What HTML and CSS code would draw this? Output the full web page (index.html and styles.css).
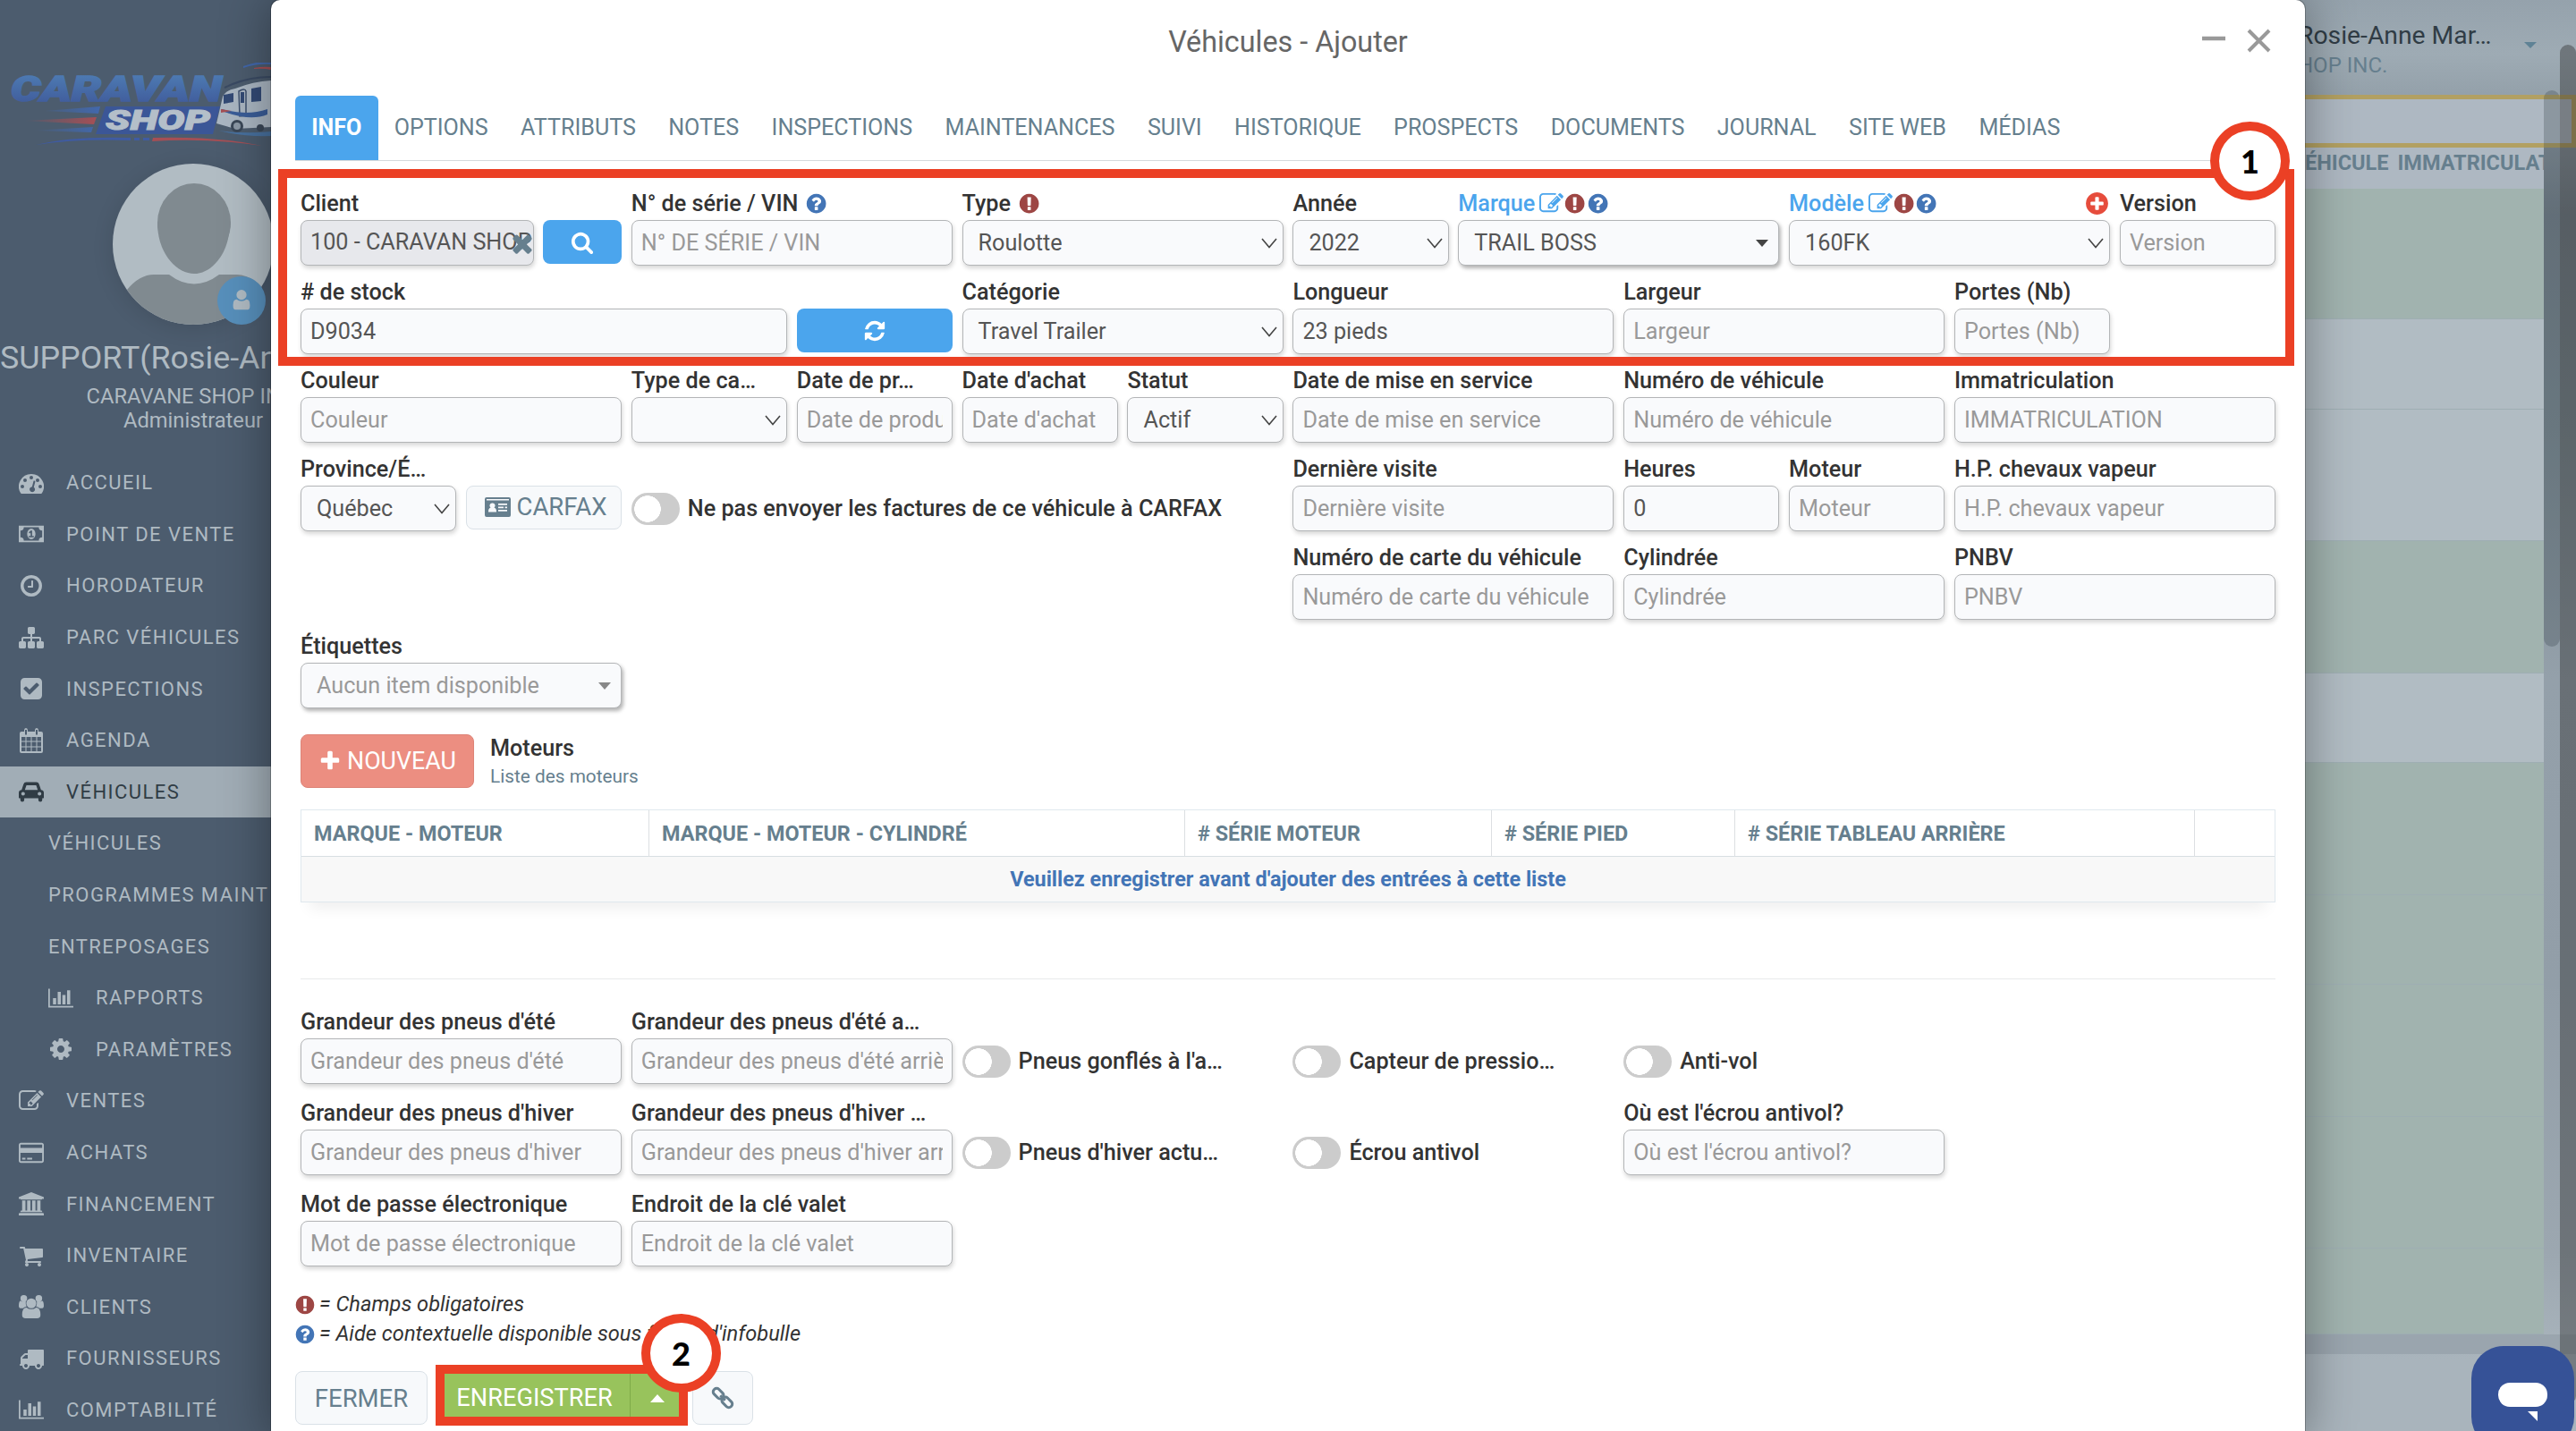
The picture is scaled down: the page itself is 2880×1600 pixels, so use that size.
FILE: index.html
```html
<!DOCTYPE html>
<html lang="fr">
<head>
  <meta charset="UTF-8">
  <meta name="viewport" content="width=device-width, initial-scale=1.0">
  <title>Véhicules - Ajouter</title>
  <link rel="stylesheet" href="styles.css">
</head>
<body>
  <svg class="sprite">
    <symbol id="i-dash" viewBox="0 0 1792 1792"><path fill-rule="evenodd" d="M896 256a896 896 0 0 0-755 1379q19 29 54 29h1402q35 0 54-29a896 896 0 0 0-755-1379zM256 1024a128 128 0 1 1 0 256 128 128 0 1 1 0-256zM448 576a128 128 0 1 1 0 256 128 128 0 1 1 0-256zM896 384a128 128 0 1 1 0 256 128 128 0 1 1 0-256zM1344 576a128 128 0 1 1 0 256 128 128 0 1 1 0-256zM1536 1024a128 128 0 1 1 0 256 128 128 0 1 1 0-256zM950 1160l101-382q6-26 29-39t49-7 39 30 7 48l-101 382a192 192 0 1 1-124-32z"/></symbol>
    <symbol id="i-money" viewBox="0 0 1920 1792"><path fill-rule="evenodd" d="M0 256h1920v1280H0zM384 384a256 256 0 0 1-256 256v512a256 256 0 0 1 256 256h1152a256 256 0 0 1 256-256V640a256 256 0 0 1-256-256zM960 480a320 416 0 1 1 0 832 320 416 0 1 1 0-832zM768 1152h384v-96h-128V640H910L762 777l77 80 72-64v263H768z"/></symbol>
    <symbol id="i-clock" viewBox="0 0 1792 1792"><path d="M1024 544v448q0 14-9 23t-23 9h-320q-14 0-23-9t-9-23v-64q0-14 9-23t23-9h224v-352q0-14 9-23t23-9h64q14 0 23 9t9 23zm416 352q0-148-73-273t-198-198-273-73-273 73-198 198-73 273 73 273 198 198 273 73 273-73 198-198 73-273zm224 0q0 209-103 385.5t-279.5 279.5-385.5 103-385.5-103-279.5-279.5-103-385.5 103-385.5 279.5-279.5 385.5-103 385.5 103 279.5 279.5 103 385.5z"/></symbol>
    <symbol id="i-sitemap" viewBox="0 0 1792 1792"><path d="M1792 1248v320q0 40-28 68t-68 28h-320q-40 0-68-28t-28-68v-320q0-40 28-68t68-28h96v-192h-512v192h96q40 0 68 28t28 68v320q0 40-28 68t-68 28h-320q-40 0-68-28t-28-68v-320q0-40 28-68t68-28h96v-192h-512v192h96q40 0 68 28t28 68v320q0 40-28 68t-68 28h-320q-40 0-68-28t-28-68v-320q0-40 28-68t68-28h96v-192q0-52 38-90t90-38h512v-192h-96q-40 0-68-28t-28-68v-320q0-40 28-68t68-28h320q40 0 68 28t28 68v320q0 40-28 68t-68 28h-96v192h512q52 0 90 38t38 90v192h96q40 0 68 28t28 68z"/></symbol>
    <symbol id="i-check" viewBox="0 0 1792 1792"><path d="M813 1299l614-614q19-19 19-45t-19-45l-102-102q-19-19-45-19t-45 19l-467 467-211-211q-19-19-45-19t-45 19l-102 102q-19 19-19 45t19 45l358 358q19 19 45 19t45-19zm851-883v960q0 119-84.500 203.500t-203.500 84.500h-960q-119 0-203.500-84.500t-84.500-203.500v-960q0-119 84.500-203.500t203.500-84.500h960q119 0 203.500 84.500t84.500 203.500z"/></symbol>
    <symbol id="i-calendar" viewBox="0 0 1792 1792"><path fill-rule="evenodd" d="M192 256h192V160q0-160 128-160t128 160v96h512V160q0-160 128-160t128 160v96h192q128 0 128 128v1280q0 128-128 128H192q-128 0-128-128V384q0-128 128-128zM448 128v352h128V128zM1216 128v352h128V128zM192 640v288h288V640zM544 640v288h320V640zM928 640v288h320V640zM1312 640v288h288V640zM192 992v320h288V992zM544 992v320h320V992zM928 992v320h320V992zM1312 992v320h288V992zM192 1376v288h288v-288zM544 1376v288h320v-288zM928 1376v288h320v-288zM1312 1376v288h288v-288z"/></symbol>
    <symbol id="i-car" viewBox="0 0 2048 1792"><path fill-rule="evenodd" d="M230 768L390 290q46-162 220-162h828q174 0 220 162l160 478q230 20 230 230v410q0 32-32 32h-96v128q0 160-160 160t-160-160v-128H448v128q0 160-160 160t-160-160v-128H32q-32 0-32-32V998q0-210 230-230zM496 768h1056L1430 400q-8-16-24-16H642q-16 0-24 16zM352 928a150 150 0 1 0 0 300 150 150 0 1 0 0-300zM1696 928a150 150 0 1 0 0 300 150 150 0 1 0 0-300z"/></symbol>
    <symbol id="i-chart" viewBox="0 0 2048 1792"><path d="M640 896v512h-256v-512h256zm384-512v1024h-256v-1024h256zm1024 1152v128h-2048v-1536h128v1408h1920zm-640-896v768h-256v-768h256zm384-384v1152h-256v-1152h256z"/></symbol>
    <symbol id="i-cog" viewBox="0 0 1792 1792"><path d="M1152 896q0-106-75-181t-181-75-181 75-75 181 75 181 181 75 181-75 75-181zm512-109v222q0 12-8 23t-20 13l-185 28q-19 54-39 91 35 50 107 138 10 12 10 25t-9 23q-27 37-99 108t-94 71q-12 0-26-9l-138-108q-44 23-91 38-16 136-29 186-7 28-36 28h-222q-14 0-24.500-8.500t-11.500-21.500l-28-184q-49-16-90-37l-141 107q-10 9-25 9-14 0-25-11-126-114-165-168-7-10-7-23 0-12 8-23 15-21 51-66.500t54-70.500q-27-50-41-99l-183-27q-13-2-21-12.500t-8-23.500v-222q0-12 8-23t19-13l186-28q14-46 39-92-40-57-107-138-10-12-10-24 0-10 9-23 26-36 98.500-107.500t94.500-71.500q13 0 26 10l138 107q44-23 91-38 16-136 29-186 7-28 36-28h222q14 0 24.500 8.500t11.500 21.500l28 184q49 16 90 37l142-107q9-9 24-9 13 0 25 10 129 119 165 170 7 8 7 22 0 12-8 23-15 21-51 66.500t-54 70.500q26 50 41 98l183 28q13 2 21 12.500t8 23.500z"/></symbol>
    <symbol id="i-edit" viewBox="0 0 1792 1792"><path d="M888 1184l116-116-152-152-116 116v56h96v96h56zm440-720q-16-16-33 1l-350 350q-17 17-1 33t33-1l350-350q17-17 1-33zm80 594v190q0 119-84.500 203.500t-203.500 84.500h-832q-119 0-203.500-84.500t-84.500-203.500v-832q0-119 84.500-203.500t203.500-84.500h832q63 0 117 25 15 7 18 23 3 17-9 29l-49 49q-14 14-32 8-23-6-45-6h-832q-66 0-113 47t-47 113v832q0 66 47 113t113 47h832q66 0 113-47t47-113v-126q0-13 9-22l64-64q15-15 35-7t20 29zm-96-738l288 288-672 672h-288v-288zm444 132l-92 92-288-288 92-92q28-28 68-28t68 28l152 152q28 28 28 68t-28 68z"/></symbol>
    <symbol id="i-card" viewBox="0 0 1920 1792"><path d="M1760 128q66 0 113 47t47 113v1216q0 66-47 113t-113 47h-1600q-66 0-113-47t-47-113v-1216q0-66 47-113t113-47h1600zm-1600 128q-13 0-22.500 9.500t-9.500 22.500v224h1664v-224q0-13-9.500-22.500t-22.500-9.500h-1600zm1600 1280q13 0 22.500-9.500t9.500-22.500v-608h-1664v608q0 13 9.500 22.500t22.500 9.500h1600zm-1504-128v-128h256v128h-256zm384 0v-128h384v128h-384z"/></symbol>
    <symbol id="i-bank" viewBox="0 0 1920 1792"><path d="M960 0l960 384v128h-128q0 26-20.500 45t-48.500 19h-1526q-28 0-48.500-19t-20.500-45h-128v-128zm-704 640h256v768h128v-768h256v768h128v-768h256v768h128v-768h256v768h59q28 0 48.500 19t20.500 45v64h-1664v-64q0-26 20.500-45t48.500-19h59v-768zm1595 960q28 0 48.500 19t20.500 45v128h-1920v-128q0-26 20.500-45t48.500-19h1782z"/></symbol>
    <symbol id="i-cart" viewBox="0 0 1792 1792"><path d="M704 1536q0 52-38 90t-90 38-90-38-38-90 38-90 90-38 90 38 38 90zm896 0q0 52-38 90t-90 38-90-38-38-90 38-90 90-38 90 38 38 90zm128-1088v512q0 24-16.500 42.500t-40.500 21.500l-1044 122q13 60 13 70 0 16-24 64h920q26 0 45 19t19 45-19 45-45 19h-1024q-26 0-45-19t-19-45q0-11 8-31.500t16-36 21.500-40 15.500-29.500l-177-823h-204q-26 0-45-19t-19-45 19-45 45-19h256q16 0 28.500 6.500t19.500 15.500 13 24.500 8 26 5.500 29.500 4.500 26h1201q26 0 45 19t19 45z"/></symbol>
    <symbol id="i-users" viewBox="0 0 1920 1792"><path d="M384 0a256 256 0 1 1 0 512 256 256 0 1 1 0-512zM1536 0a256 256 0 1 1 0 512 256 256 0 1 1 0-512zM960 256a384 384 0 1 1 0 768 384 384 0 1 1 0-768zM593 896q-162 5-265 128H194Q0 1024 0 850q0-402 140-402 80 60 244 64 80 0 150-26-22 240 59 410zM1327 896q162 5 265 128h134q194 0 194-174 0-402-140-402-80 60-244 64-80 0-150-26 22 240-59 410zM1664 1533q0 259-267 259H523q-267 0-267-259 0-573 340-573 150 128 364 128t364-128q340 0 340 573z"/></symbol>
    <symbol id="i-truck" viewBox="0 0 1792 1792"><path d="M640 1408q0-52-38-90t-90-38-90 38-38 90 38 90 90 38 90-38 38-90zm-384-512h384v-256h-158q-13 0-22 9l-195 195q-9 9-9 22v30zm1280 512q0-52-38-90t-90-38-90 38-38 90 38 90 90 38 90-38 38-90zm256-1088v1024q0 15-4 26.500t-13.500 18.500-16.500 11.500-23.500 6-22.500 2-25.500 0-22.500-.5q0 106-75 181t-181 75-181-75-75-181h-384q0 106-75 181t-181 75-181-75-75-181h-64q-3 0-22.500.5t-25.500 0-22.500-2-23.500-6-16.500-11.500-13.500-18.500-4-26.500q0-26 19-45t45-19v-320q0-8-.5-35t0-38 2.500-34.500 6.500-37 14-30.500 22.500-30l198-198q19-19 50.500-32t58.500-13h160v-192q0-26 19-45t45-19h1024q26 0 45 19t19 45z"/></symbol>
    <symbol id="i-user" viewBox="0 0 1792 1792"><path d="M1600 1280q0 384-190 384H382q-190 0-190-384 0-480 300-480 180 150 404 150t404-150q300 0 300 480zM896 0a420 420 0 1 1 0 840 420 420 0 1 1 0-840z"/></symbol>
    <symbol id="i-plus" viewBox="0 0 1792 1792"><path d="M1600 736v192q0 40-28 68t-68 28h-416v416q0 40-28 68t-68 28h-192q-40 0-68-28t-28-68v-416h-416q-40 0-68-28t-28-68v-192q0-40 28-68t68-28h416v-416q0-40 28-68t68-28h192q40 0 68 28t28 68v416h416q40 0 68 28t28 68z"/></symbol>
    <symbol id="i-search" viewBox="0 0 1792 1792"><path d="M1216 832q0-185-131.500-316.500t-316.500-131.500-316.500 131.500-131.500 316.500 131.500 316.500 316.500 131.500 316.500-131.500 131.500-316.500zm512 832q0 52-38 90t-90 38q-54 0-90-38l-343-342q-179 124-399 124-143 0-273.500-55.500t-225-150-150-225-55.500-273.500 55.500-273.500 150-225 225-150 273.500-55.500 273.500 55.500 225 150 150 225 55.500 273.500q0 220-124 399l343 343q37 37 37 90z"/></symbol>
    <symbol id="i-refresh" viewBox="0 0 1792 1792"><path d="M1639 1056q0 5-1 7-64 268-268 434.500t-478 166.500q-146 0-282.500-55t-243.500-157l-129 129q-19 19-45 19t-45-19-19-45v-448q0-26 19-45t45-19h448q26 0 45 19t19 45-19 45l-137 137q71 66 161 102t187 36q134 0 250-65t186-179q11-17 53-117 8-23 30-23h192q13 0 22.500 9.500t9.500 22.500zm25-800v448q0 26-19 45t-45 19h-448q-26 0-45-19t-19-45 19-45l138-138q-148-137-349-137-134 0-250 65t-186 179q-11 17-53 117-8 23-30 23h-199q-13 0-22.500-9.500t-9.500-22.500v-7q65-268 270-434.500t480-166.500q146 0 284 55.500t245 156.500l130-129q19-19 45-19t45 19 19 45z"/></symbol>
    <symbol id="i-times" viewBox="0 0 1792 1792"><path d="M1490 1322q0 40-28 68l-136 136q-28 28-68 28t-68-28l-294-294-294 294q-28 28-68 28t-68-28l-136-136q-28-28-28-68t28-68l294-294-294-294q-28-28-28-68t28-68l136-136q28-28 68-28t68 28l294 294 294-294q28-28 68-28t68 28l136 136q28 28 28 68t-28 68l-294 294 294 294q28 28 28 68z"/></symbol>
    <symbol id="i-req" viewBox="0 0 1792 1792"><path d="M896 128q209 0 385.500 103t279.500 279.500 103 385.500-103 385.500-279.500 279.500-385.500 103-385.500-103-279.500-279.500-103-385.500 103-385.500 279.500-279.500 385.500-103zm128 1247v-190q0-14-9-23.500t-22-9.500h-192q-13 0-23 10t-10 23v190q0 13 10 23t23 10h192q13 0 22-9.500t9-23.500zm-2-344l18-621q0-12-10-18-10-8-24-8h-220q-14 0-24 8-10 6-10 18l17 621q0 10 10 17.500t24 7.500h185q14 0 23.500-7.500t10.500-17.500z"/></symbol>
    <symbol id="i-help" viewBox="0 0 1792 1792"><path d="M1024 1376v-192q0-14-9-23t-23-9h-192q-14 0-23 9t-9 23v192q0 14 9 23t23 9h192q14 0 23-9t9-23zm256-672q0-88-55.500-163t-138.500-116-170-41q-243 0-371 213-15 24 8 42l132 100q7 6 19 6 16 0 25-12 53-68 86-92 34-24 86-24 48 0 85.500 26t37.500 59q0 38-20 61t-68 45q-63 28-115.500 86.500t-52.500 125.500v36q0 14 9 23t23 9h192q14 0 23-9t9-23q0-19 21.500-49.500t54.500-49.500q32-18 49-28.500t46-35 44.500-48 28-60.500 12.500-81zm384 192q0 209-103 385.500t-279.500 279.500-385.500 103-385.500-103-279.500-279.500-103-385.500 103-385.500 279.500-279.500 385.500-103 385.500 103 279.500 279.500 103 385.500z"/></symbol>
    <symbol id="i-addc" viewBox="0 0 1792 1792"><path d="M1344 960v-128q0-26-19-45t-45-19h-256v-256q0-26-19-45t-45-19h-128q-26 0-45 19t-19 45v256h-256q-26 0-45 19t-19 45v128q0 26 19 45t45 19h256v256q0 26 19 45t45 19h128q26 0 45-19t19-45v-256h256q26 0 45-19t19-45zm320-64q0 209-103 385.500t-279.500 279.500-385.500 103-385.500-103-279.500-279.500-103-385.500 103-385.500 279.500-279.500 385.500-103 385.500 103 279.500 279.500 103 385.500z"/></symbol>
    <symbol id="i-idcard" viewBox="0 0 29 22"><path fill-rule="evenodd" d="M2 0h25a2 2 0 0 1 2 2v18a2 2 0 0 1-2 2H2a2 2 0 0 1-2-2V2a2 2 0 0 1 2-2zM2 2v1.500h25V2zM8.500 6.500a2.800 2.800 0 0 0-2 5C4.500 12 4 14 4 16.500h9c0-2.500-.5-4.500-2.500-5a2.800 2.800 0 0 0-2-5zM15 7v1.800h10V7zM15 10.500v1.800h6v-1.800zM22.500 10.500v1.800H25v-1.800zM15 14v1.800h10V14z"/></symbol>
    <symbol id="i-link" viewBox="0 0 24 24"><g fill="none" stroke="currentColor" stroke-width="2.800"><rect x="1.500" y="4" width="12" height="7" rx="3.200" transform="rotate(45 7.500 7.500)"/><rect x="10.500" y="13" width="12" height="7" rx="3.200" transform="rotate(45 16.500 16.500)"/><path d="M9.500 9.500l5 5"/></g></symbol>
    <symbol id="i-chev" viewBox="0 0 18 12"><path d="M1 1l8 9.500L17 1" fill="none" stroke="#444" stroke-width="1.600"/></symbol>
  </svg>

  <aside class="sidebar">
    <svg class="logo" viewBox="0 0 303 100">
      <defs>
        <linearGradient id="blue" x1="0" y1="0" x2="0" y2="1"><stop offset="0" stop-color="#4f7fb6"/><stop offset="1" stop-color="#3e5798"/></linearGradient>
        <linearGradient id="fade"><stop offset="0" stop-color="#4268ad" stop-opacity="0"/><stop offset="1" stop-color="#4268ad"/></linearGradient>
        <linearGradient id="fadered"><stop offset="0" stop-color="#a54f55" stop-opacity="0"/><stop offset="1" stop-color="#a54f55"/></linearGradient>
      </defs>
      <text class="logo-top" x="12" y="43" textLength="236" lengthAdjust="spacingAndGlyphs" fill="url(#blue)" stroke="url(#blue)">CARAVAN</text>
      <path d="M50 54l62-5-2 8zM36 76l68-4-2 6z" fill="url(#fade)"/>
      <path d="M26 65l82-4-3 8z" fill="url(#fadered)"/>
      <path d="M118 49h128l-8 31H107z" fill="#3b5697"/>
      <text class="logo-bottom" x="118" y="75" textLength="117" lengthAdjust="spacingAndGlyphs">SHOP</text>
      <path d="M40 92q40-10 106-8v3q-60-2-106 5z" fill="#3f5ba3"/>
      <path d="M150 84h6v3h-6zM160 84h7v3h-7z" fill="#3f5ba3"/>
      <path d="M171 84q70-2 122 9-60-9-123-5z" fill="#a54f55"/>
      <path d="M272 4q16-6 31-5v3q-16-1-31 4z" fill="#4268ad"/>
      <path d="M284 6q10-2 19-1v3q-9-2-19-1z" fill="#a54f55"/>
      <path d="M242 68l7-30q3-7 14-9 20-8 40-9v52l-40 2z" fill="#aab6c2"/>
      <path d="M251 28l9-4q20-8 43-8" fill="none" stroke="#3a4a63" stroke-width="2"/>
      <path d="M250 36l11-2v10l-11 2zM281 29l11-2v16l-11 1z" fill="#334a75"/>
      <path d="M267 32q7-4 8 0v27l-7 1z" fill="none" stroke="#3d4f6d" stroke-width="1.500"/>
      <path d="M269 33h4v12h-4z" fill="#334a75"/>
      <path d="M248 52q28 8 51 0v6q-20 8-51-4z" fill="#3a5d98"/>
      <path d="M247 52l12 2-12 2z" fill="#a54f55"/>
      <path d="M244 76q30 4 59 1v5q-30 1-59-6z" fill="#48719f"/>
      <circle cx="265" cy="71" r="7" fill="#3a4757"/><circle cx="265" cy="71" r="4" fill="#8b98a5"/>
      <circle cx="291" cy="73" r="4" fill="#3a4757"/>
    </svg>
    <div class="avatar">
      <svg viewBox="0 0 180 180"><clipPath id="av"><circle cx="90" cy="90" r="90"/></clipPath>
        <g clip-path="url(#av)"><path fill="#b1bcc3" d="M0 0h180v180H0z"/><ellipse cx="91" cy="66" rx="41" ry="44" fill="#808a90"/><path d="M50 66c0 35 22 57 41 57s40-22 40-57z" fill="#808a90"/><path d="M0 180v-24l16-15q14-17 30-17h17q28 21 56 0h20q20 0 41 30v26z" fill="#808a90"/></g></svg>
      <span class="avatar-badge"><svg class="ic"><use href="#i-user"/></svg></span>
    </div>
    <div class="who">SUPPORT(Rosie-Anne M</div>
    <div class="who-sub">CARAVANE SHOP INC.<br>Administrateur</div>
    <nav class="menu">
      <a><svg class="ic"><use href="#i-dash"/></svg>ACCUEIL</a>
      <a><svg class="ic"><use href="#i-money"/></svg>POINT DE VENTE</a>
      <a><svg class="ic"><use href="#i-clock"/></svg>HORODATEUR</a>
      <a><svg class="ic"><use href="#i-sitemap"/></svg>PARC VÉHICULES</a>
      <a><svg class="ic"><use href="#i-check"/></svg>INSPECTIONS</a>
      <a><svg class="ic"><use href="#i-calendar"/></svg>AGENDA</a>
      <a class="active"><svg class="ic"><use href="#i-car"/></svg>VÉHICULES</a>
      <a class="sub">VÉHICULES</a>
      <a class="sub">PROGRAMMES MAINT</a>
      <a class="sub">ENTREPOSAGES</a>
      <a class="sub"><svg class="ic"><use href="#i-chart"/></svg>RAPPORTS</a>
      <a class="sub"><svg class="ic"><use href="#i-cog"/></svg>PARAMÈTRES</a>
      <a><svg class="ic"><use href="#i-edit"/></svg>VENTES</a>
      <a><svg class="ic"><use href="#i-card"/></svg>ACHATS</a>
      <a><svg class="ic"><use href="#i-bank"/></svg>FINANCEMENT</a>
      <a><svg class="ic"><use href="#i-cart"/></svg>INVENTAIRE</a>
      <a><svg class="ic"><use href="#i-users"/></svg>CLIENTS</a>
      <a><svg class="ic"><use href="#i-truck"/></svg>FOURNISSEURS</a>
      <a><svg class="ic"><use href="#i-chart"/></svg>COMPTABILITÉ</a>
    </nav>
  </aside>

  <main class="page">
    <header class="topbar">
      <div>
        <div class="topbar-name">Rosie-Anne Mar…</div>
        <div class="topbar-org">HOP INC.</div>
      </div>
      <i class="caret"></i>
    </header>
    <div class="filter"></div>
    <div class="list-head"><span>ÉHICULE</span><span>IMMATRICULATION</span></div>
    <div class="list">
      <div class="row green h146"></div>
      <div class="row h101"></div>
      <div class="row"></div>
      <div class="row green"></div>
      <div class="row h101"></div>
      <div class="row green"></div>
      <div class="row green h101"></div>
      <div class="row green"></div>
      <div class="row green"></div>
      <div class="row green last"></div>
    </div>
    <div class="list-foot"></div>
    <span class="scroll scroll-list"></span>
    <span class="scroll scroll-page"></span>
  </main>

  <section class="modal">
    <header class="modal-head">
      <h1>Véhicules - Ajouter</h1>
      <div class="win"><svg viewBox="0 0 80 30"><path d="M1 13h26" stroke-width="4.500"/><path d="M53 4l23 23M76 4L53 27" stroke-width="4"/></svg></div>
    </header>
    <nav class="tabs">
      <a class="on">INFO</a><a>OPTIONS</a><a>ATTRIBUTS</a><a>NOTES</a><a>INSPECTIONS</a><a>MAINTENANCES</a><a>SUIVI</a><a>HISTORIQUE</a><a>PROSPECTS</a><a>DOCUMENTS</a><a>JOURNAL</a><a>SITE WEB</a><a>MÉDIAS</a>
    </nav>

    <div class="grid">
      <div class="field w2"><label>Client</label>
        <div class="combo"><div class="input locked">100 - CARAVAN SHOP<svg class="ic"><use href="#i-times"/></svg></div><button class="btn blue"><svg class="ic"><use href="#i-search"/></svg></button></div></div>
      <div class="field w2"><label>N° de série / VIN <svg class="ic help sp"><use href="#i-help"/></svg></label><input placeholder="N° DE SÉRIE / VIN"></div>
      <div class="field w2"><label>Type <svg class="ic req sp"><use href="#i-req"/></svg></label><div class="select">Roulotte<svg><use href="#i-chev"/></svg></div></div>
      <div class="field"><label>Année</label><div class="select">2022<svg><use href="#i-chev"/></svg></div></div>
      <div class="field w2"><label class="link">Marque <svg class="ic"><use href="#i-edit"/></svg><svg class="ic req"><use href="#i-req"/></svg><svg class="ic help"><use href="#i-help"/></svg></label><div class="select drop">TRAIL BOSS<i></i></div></div>
      <div class="field w2"><label class="link">Modèle <svg class="ic"><use href="#i-edit"/></svg><svg class="ic req"><use href="#i-req"/></svg><svg class="ic help"><use href="#i-help"/></svg><svg class="ic add"><use href="#i-addc"/></svg></label><div class="select">160FK<svg><use href="#i-chev"/></svg></div></div>
      <div class="field"><label>Version</label><input placeholder="Version"></div>

      <div class="field w3"><label># de stock</label><input value="D9034"></div>
      <div class="field bottom"><button class="btn blue"><svg class="ic"><use href="#i-refresh"/></svg></button></div>
      <div class="field w2"><label>Catégorie</label><div class="select">Travel Trailer<svg><use href="#i-chev"/></svg></div></div>
      <div class="field w2"><label>Longueur</label><input value="23 pieds"></div>
      <div class="field w2"><label>Largeur</label><input placeholder="Largeur"></div>
      <div class="field"><label>Portes (Nb)</label><input placeholder="Portes (Nb)"></div>

      <div class="field w2 from1"><label>Couleur</label><input placeholder="Couleur"></div>
      <div class="field"><label>Type de ca…</label><div class="select"><svg><use href="#i-chev"/></svg></div></div>
      <div class="field"><label>Date de pr…</label><input placeholder="Date de production"></div>
      <div class="field"><label>Date d'achat</label><input placeholder="Date d'achat"></div>
      <div class="field"><label>Statut</label><div class="select">Actif<svg><use href="#i-chev"/></svg></div></div>
      <div class="field w2"><label>Date de mise en service</label><input placeholder="Date de mise en service"></div>
      <div class="field w2"><label>Numéro de véhicule</label><input placeholder="Numéro de véhicule"></div>
      <div class="field w2"><label>Immatriculation</label><input placeholder="IMMATRICULATION"></div>

      <div class="field"><label>Province/É…</label><div class="select">Québec<svg><use href="#i-chev"/></svg></div></div>
      <div class="field bottom"><button class="btn light carfax"><svg class="idcard"><use href="#i-idcard"/></svg>CARFAX</button></div>
      <div class="field w4 bottom"><div class="toggle"><i></i>Ne pas envoyer les factures de ce véhicule à CARFAX</div></div>
      <div class="field w2"><label>Dernière visite</label><input placeholder="Dernière visite"></div>
      <div class="field"><label>Heures</label><input value="0"></div>
      <div class="field"><label>Moteur</label><input placeholder="Moteur"></div>
      <div class="field w2"><label>H.P. chevaux vapeur</label><input placeholder="H.P. chevaux vapeur"></div>

      <div class="field w2 from7"><label>Numéro de carte du véhicule</label><input placeholder="Numéro de carte du véhicule"></div>
      <div class="field w2"><label>Cylindrée</label><input placeholder="Cylindrée"></div>
      <div class="field w2"><label>PNBV</label><input placeholder="PNBV"></div>

      <div class="field w2"><label>Étiquettes</label><div class="select drop muted">Aucun item disponible<i></i></div></div>
    </div>

    <div class="engines">
      <button class="btn new"><svg class="ic"><use href="#i-plus"/></svg>NOUVEAU</button>
      <div><h2>Moteurs</h2><p>Liste des moteurs</p></div>
    </div>
    <div class="table">
      <div class="table-head"><span>MARQUE - MOTEUR</span><span>MARQUE - MOTEUR - CYLINDRÉ</span><span># SÉRIE MOTEUR</span><span># SÉRIE PIED</span><span># SÉRIE TABLEAU ARRIÈRE</span><span></span></div>
      <div class="table-empty">Veuillez enregistrer avant d'ajouter des entrées à cette liste</div>
    </div>

    <div class="grid tires">
      <div class="field w2"><label>Grandeur des pneus d'été</label><input placeholder="Grandeur des pneus d'été"></div>
      <div class="field w2"><label>Grandeur des pneus d'été a…</label><input placeholder="Grandeur des pneus d'été arrière"></div>
      <div class="field w2 bottom"><div class="toggle"><i></i>Pneus gonflés à l'a…</div></div>
      <div class="field w2 bottom"><div class="toggle"><i></i>Capteur de pressio…</div></div>
      <div class="field w2 bottom"><div class="toggle"><i></i>Anti-vol</div></div>

      <div class="field w2 from1"><label>Grandeur des pneus d'hiver</label><input placeholder="Grandeur des pneus d'hiver"></div>
      <div class="field w2"><label>Grandeur des pneus d'hiver …</label><input placeholder="Grandeur des pneus d'hiver arrière"></div>
      <div class="field w2 bottom"><div class="toggle"><i></i>Pneus d'hiver actu…</div></div>
      <div class="field w2 bottom"><div class="toggle"><i></i>Écrou antivol</div></div>
      <div class="field w2"><label>Où est l'écrou antivol?</label><input placeholder="Où est l'écrou antivol?"></div>

      <div class="field w2 from1"><label>Mot de passe électronique</label><input placeholder="Mot de passe électronique"></div>
      <div class="field w2"><label>Endroit de la clé valet</label><input placeholder="Endroit de la clé valet"></div>
    </div>

    <div class="legend">
      <p><svg class="ic req"><use href="#i-req"/></svg>= Champs obligatoires</p>
      <p><svg class="ic help"><use href="#i-help"/></svg>= Aide contextuelle disponible sous forme d'infobulle</p>
    </div>
    <footer class="actions">
      <button class="btn light close">FERMER</button>
      <div class="split"><button>ENREGISTRER</button><button class="up"><i></i></button></div>
      <button class="btn light linkbtn"><svg class="ic"><use href="#i-link"/></svg></button>
    </footer>
  </section>

  <!-- step markers -->
  <div class="frame frame1"></div>
  <div class="step step1">1</div>
  <div class="frame frame2"></div>
  <div class="step step2">2</div>

  <div class="chat"><svg viewBox="0 0 115 115"><rect x="30" y="41" width="55" height="27" rx="13" fill="#fff"/><path d="M63 73h11v11z" fill="#fff"/></svg></div>
</body>
</html>
```
FILE: styles.css
```css
* {
  box-sizing: border-box;
}
body {
  margin: 0;
  width: 2880px;
  height: 1600px;
  overflow: hidden;
  position: relative;
  display: flex;
  font-family: Roboto, sans-serif;
  font-size: 25.2px;
  color: #333;
  background: #9ba7b0;
}
h1, h2, p {
  margin: 0;
}
button, input {
  font: inherit;
}
.sprite {
  position: absolute;
  width: 0;
  height: 0;
}
.ic {
  width: 26px;
  height: 26px;
  fill: currentColor;
  flex: none;
}

/* sidebar */
.sidebar {
  width: 432px;
  height: 1600px;
  flex: none;
  overflow: hidden;
  background: #4c5c6e;
  color: #afbac2;
  padding-top: 70px;
}
.logo {
  display: block;
  width: 303px;
  height: 100px;
}
.logo-top {
  font: italic 900 38px Roboto, sans-serif;
  stroke-width: 1.5px;
}
.logo-bottom {
  font: italic 900 32px Roboto, sans-serif;
  fill: #b4bfc9;
  stroke: #b4bfc9;
  stroke-width: 1px;
}
.avatar {
  position: relative;
  width: 180px;
  height: 180px;
  margin: 13px auto 0;
  border-radius: 50%;
  box-shadow: 0 4px 24px rgba(0, 0, 0, 0.12);
}
.avatar-badge {
  position: absolute;
  right: 9px;
  bottom: 0;
  width: 54px;
  height: 54px;
  border-radius: 50%;
  background: #578fbb;
  display: flex;
  align-items: center;
  justify-content: center;
}
.avatar-badge .ic {
  width: 24px;
  height: 24px;
}
.who {
  font-size: 35.8px;
  line-height: 44px;
  margin-top: 15px;
  height: 52px;
  white-space: nowrap;
}
.who-sub {
  font-size: 23.7px;
  line-height: 27px;
  text-align: center;
  height: 81px;
}
.menu a {
  display: flex;
  align-items: center;
  height: 57.6px;
  padding-left: 21px;
  font-size: 22px;
  letter-spacing: 1.45px;
  white-space: nowrap;
}
.menu .ic {
  width: 28px;
  height: 28px;
  margin-right: 25px;
}
.menu .sub {
  padding-left: 54px;
}
.menu .active {
  background: #a1adb6;
  color: #303c45;
}

/* page behind the modal */
.page {
  position: relative;
  flex: 1;
  padding-left: 2145px;
  background: linear-gradient(#95a2ac 0, #9eabb4 60px, #76828c 240px, #7f8e96 480px, #94a0aa 760px, #929ea8 1100px, #9ca7b0 1400px, #a9b4bc 1520px);
}
.topbar {
  height: 106px;
  display: flex;
  padding-top: 23px;
  margin-left: -8px;
}
.topbar-name {
  width: 253px;
  font-size: 28.3px;
  line-height: 34px;
  color: #303c45;
}
.topbar-org {
  font-size: 24px;
  line-height: 32px;
  color: #667f8e;
}
.caret {
  width: 0;
  height: 0;
  margin-top: 24px;
  border: 7px solid transparent;
  border-top-color: #5f8295;
  border-bottom: 0;
}
.filter {
  height: 59px;
  border: 5px solid #b2a062;
  border-left: 0;
  background: #aeb8c2;
}
.list-head {
  width: 267px;
  height: 46px;
  overflow: hidden;
  display: flex;
  gap: 10px;
  padding-top: 2px;
  line-height: 30px;
  background: #aeb8c2;
  font-size: 23.5px;
  font-weight: 700;
  color: #667f8e;
}
.list-head span {
  flex: none;
}
.list {
  width: 267px;
}
.row {
  height: 147.5px;
  background: #b1bcc3;
  border-bottom: 1px solid #9eaeb3;
}
.row.green {
  background: #a1b3af;
}
.row.h146 {
  height: 146px;
}
.row.h101 {
  height: 100.5px;
}
.row.last {
  height: 96px;
}
.list-foot {
  height: 22px;
  background: #9aa5ae;
}
.scroll {
  position: absolute;
  width: 18px;
  border-radius: 9px;
  background: rgba(40, 50, 60, 0.25);
}
.scroll-list {
  right: 18px;
  top: 101px;
  height: 622px;
}
.scroll-page {
  right: 0;
  top: 50px;
  height: 1520px;
  background: rgba(40, 40, 40, 0.4);
}

/* modal */
.modal {
  position: absolute;
  left: 303px;
  top: 0;
  width: 2274px;
  height: 1612px;
  padding: 0 27px;
  background: #fff;
  border-radius: 10px;
  box-shadow: 0 0 0 1px rgba(0, 0, 0, 0.22), 0 0 55px rgba(0, 0, 0, 0.38);
}
.modal-head {
  position: relative;
  height: 107px;
  text-align: center;
}
.modal-head h1 {
  font-size: 32.3px;
  font-weight: 400;
  line-height: 95px;
  color: #666;
}
.win {
  position: absolute;
  right: 9px;
  top: 30px;
  width: 80px;
  height: 30px;
}
.win svg {
  display: block;
  stroke: #999;
}
.tabs {
  display: flex;
  height: 73px;
  border-bottom: 1px solid #d5d9dc;
}
.tabs a {
  padding: 0 18.2px;
  line-height: 71px;
  color: #667f8e;
  font-size: 25.1px;
}
.tabs .on {
  background: #4ba5ed;
  color: #fff;
  font-weight: 700;
  border-radius: 6px 6px 0 0;
}

.grid {
  display: grid;
  grid-template-columns: repeat(12, 1fr);
  column-gap: 10.8px;
  row-gap: 12px;
  margin: 29px 6px 0 6px;
}
.field {
  height: 87px;
  min-width: 0;
}
.bottom {
  padding-top: 37px;
}
.w2 { grid-column-end: span 2; }
.w3 { grid-column-end: span 3; }
.w4 { grid-column-end: span 4; }
.from7 { grid-column-start: 7; }
.from1 { grid-column-start: 1; }
label {
  display: flex;
  align-items: center;
  height: 37px;
  white-space: nowrap;
  font-weight: 500;
}
label .ic {
  width: 25.3px;
  height: 25.3px;
}
label .sp {
  margin-left: 8px;
}
.link {
  color: #4ba5ed;
}
.link .ic:first-of-type {
  width: 27px;
  height: 27px;
  margin-left: 5px;
}
.req {
  color: #9d4644;
}
.help {
  color: #4375b6;
}
label .add {
  width: 29px;
  height: 29px;
  margin-left: auto;
  color: #e64c3c;
}
input, .select, .input {
  display: block;
  width: 100%;
  height: 51px;
  padding: 0 10px;
  border: 1.5px solid #b3b5b7;
  border-radius: 8px;
  background: #f9fafc;
  box-shadow: 1px 3px 5px rgba(0, 0, 0, 0.16);
  color: #555;
}
input::placeholder {
  color: #999;
  opacity: 1;
}
.select {
  display: flex;
  align-items: center;
  padding: 0 6px 0 17px;
}
.select svg {
  width: 18px;
  height: 12px;
  margin-left: auto;
}
.select i {
  margin: 0 5px 0 auto;
  border: 7px solid transparent;
  border-top: 8px solid #444;
  border-bottom: 0;
}
.drop {
  box-shadow: 2px 3px 4px rgba(0, 0, 0, 0.3);
}
.muted {
  color: #999;
}
.muted i {
  border-top-color: #888;
}
.combo {
  display: flex;
  gap: 10px;
}
.combo .btn {
  width: 88px;
  flex: none;
}
.locked {
  position: relative;
  line-height: 48px;
  background: #e7e8ec;
  white-space: nowrap;
  overflow: hidden;
}
.locked .ic {
  position: absolute;
  right: -4px;
  top: 9px;
  width: 32px;
  height: 32px;
  color: #667f8e;
}
.btn {
  display: flex;
  align-items: center;
  justify-content: center;
  width: 100%;
  height: 49px;
  padding: 0;
  border: 1px solid transparent;
  border-radius: 8px;
  font-size: 27.5px;
}
.blue {
  background: #4ba5ed;
  color: #fff;
}
.light {
  background: #f7f9fb;
  border-color: #dae1e7;
  color: #667f8e;
}
.carfax {
  padding: 0 0 2px 4px;
}
.idcard {
  width: 29px;
  height: 22px;
  margin-right: 7px;
  fill: currentColor;
}
.toggle {
  display: flex;
  align-items: center;
  height: 51px;
  font-weight: 500;
  white-space: nowrap;
}
.toggle i {
  width: 54px;
  height: 36px;
  margin-right: 9px;
  border-radius: 18px;
  background: radial-gradient(circle 15px at 18px 18px, #fff 97%, #ccc 100%);
}

.engines {
  display: flex;
  gap: 18px;
  margin: 30px 0 0 6px;
}
.new {
  width: 194px;
  height: 60px;
  gap: 6px;
  background: #ec8e81;
  border-color: #dd8478;
  color: #fff;
  font-size: 26.8px;
}
.new .ic {
  width: 26px;
  height: 26px;
}
.engines h2 {
  padding-top: 1px;
  font-size: 25.2px;
  font-weight: 500;
  line-height: 30px;
}
.engines p {
  font-size: 20.8px;
  line-height: 33px;
  color: #667f8e;
}
.table {
  margin: 20px 6px 0 6px;
  border: 1px solid #dfe8ee;
  box-shadow: 0 16px 16px -10px rgba(0, 0, 0, 0.07);
}
.table-head {
  display: grid;
  grid-template-columns: 389px 599px 343px 272px 514px 1fr;
  height: 52px;
  line-height: 52px;
  border-bottom: 1px solid #d8dee2;
  font-size: 23.4px;
  font-weight: 700;
  color: #667f8e;
}
.table-head span {
  padding-left: 14px;
  border-right: 1px solid #dcdfe2;
}
.table-head span:last-child {
  border: 0;
}
.table-empty {
  height: 50px;
  line-height: 50px;
  background: #f8f8f8;
  text-align: center;
  font-size: 23.4px;
  font-weight: 700;
  color: #4375b6;
}
.tires {
  margin-top: 85px;
  padding-top: 29px;
  border-top: 1px solid #e8eaeb;
  row-gap: 15px;
}

.legend {
  margin-top: 27px;
  font-size: 23.65px;
  font-style: italic;
  line-height: 33px;
}
.legend p {
  display: flex;
  align-items: center;
}
.legend .ic {
  width: 24px;
  height: 24px;
  margin-right: 4px;
  margin-left: -1px;
}
.actions {
  display: flex;
  margin-top: 25px;
}
.actions .btn {
  height: 60px;
}
.close {
  width: 148px;
}
.split {
  display: flex;
  width: 273px;
  margin: 0 10px 0 13px;
}
.split button {
  width: 214px;
  padding: 0;
  border: 0;
  border-right: 1px solid #7fab48;
  background: #98c35c;
  color: #fff;
  font-size: 27.2px;
}
.split .up {
  display: flex;
  align-items: center;
  justify-content: center;
  width: 59px;
  border: 0;
}
.split i {
  border: 8px solid transparent;
  border-bottom: 9px solid #fff;
  border-top: 0;
}
.actions .linkbtn {
  width: 68px;
}

/* markers */
.frame {
  position: absolute;
  border: 10px solid #eb4025;
}
.frame1 {
  left: 311px;
  top: 189px;
  width: 2254px;
  height: 220px;
}
.frame2 {
  left: 487px;
  top: 1526px;
  width: 282px;
  height: 68px;
}
.step {
  position: absolute;
  width: 89px;
  height: 88px;
  border: 10px solid #eb4025;
  border-radius: 50%;
  background: #fff;
  color: #000;
  font: 900 36px/68px Lato, sans-serif;
  text-align: center;
}
.step1 {
  left: 2471px;
  top: 136px;
}
.step2 {
  left: 717px;
  top: 1469px;
}

.chat {
  position: absolute;
  left: 2763px;
  top: 1505px;
  width: 115px;
  height: 115px;
  border-radius: 36px;
  background: #365297;
}
```
